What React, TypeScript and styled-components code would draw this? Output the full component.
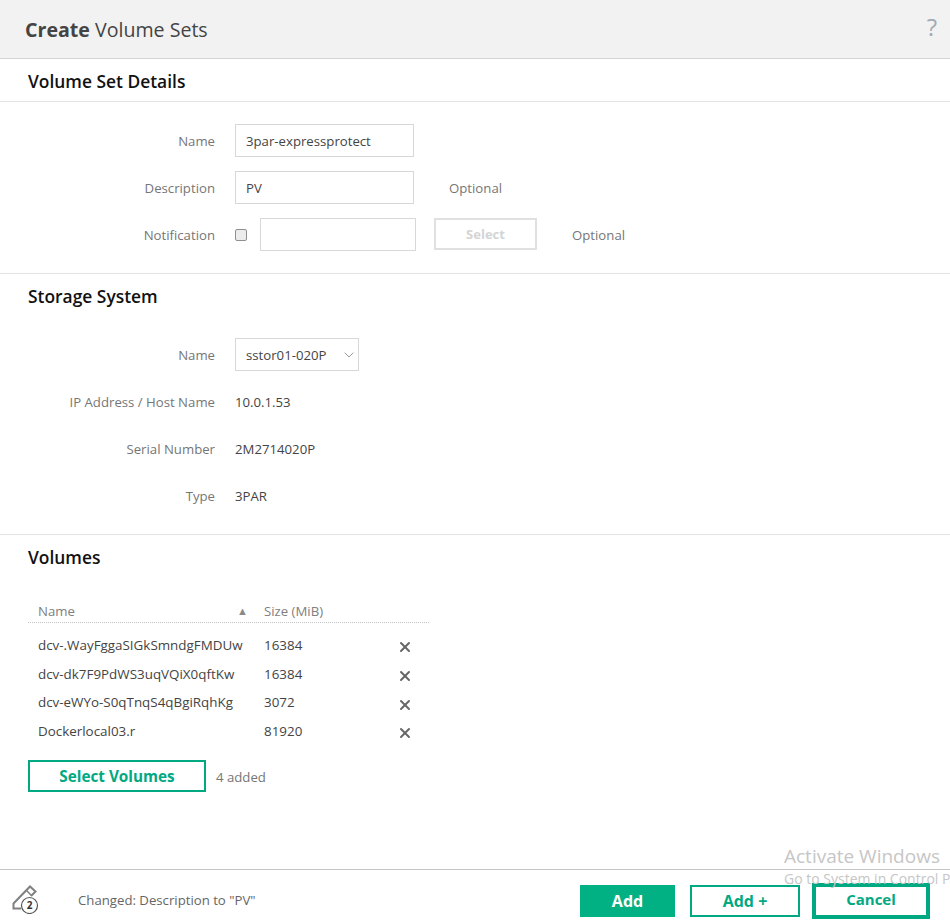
import React from "react";
import styled, { createGlobalStyle } from "styled-components";
import { ChevronDown, X } from "lucide-react";

const GlobalStyle = createGlobalStyle`
  html, body {
    margin: 0;
    padding: 0;
    background: #fff;
  }
  body {
    font-family: "Open Sans", "Liberation Sans", sans-serif;
    font-size: 13.2px;
    color: #555;
  }
`;

const Page = styled.div`
  position: relative;
  width: 950px;
  height: 922px;
  overflow: hidden;
  display: flex;
  flex-direction: column;
`;

const Header = styled.header`
  height: 58px;
  background: #f2f2f2;
  border-bottom: 1px solid #d4d4d4;
  display: flex;
  align-items: center;
  justify-content: space-between;
  padding: 0 13px 0 25px;
  color: #444;
  flex: none;
`;

const HeaderTitle = styled.h1`
  margin: 0;
  font-size: 19.6px;
  font-weight: 400;
  b {
    font-weight: 700;
  }
`;

const Help = styled.span`
  font-size: 24px;
  color: #a3abb2;
  padding-bottom: 5px;
`;

const SectionTitle = styled.h2<{ $ruled?: boolean }>`
  margin: 0;
  height: ${(p) => (p.$ruled ? "42px" : "44px")};
  line-height: 44px;
  padding-left: 28px;
  font-size: 17.4px;
  font-weight: 600;
  color: #111;
  border-bottom: ${(p) => (p.$ruled ? "1px solid #e4e4e4" : "none")};
  flex: none;
`;

const Section = styled.section<{ $height: number }>`
  height: ${(p) => p.$height}px;
  box-sizing: border-box;
  border-bottom: 1px solid #e4e4e4;
  flex: none;
`;

const FormBody = styled.div`
  padding-top: 22px;
  display: flex;
  flex-direction: column;
  gap: 14px;
`;

const InfoBody = styled.div`
  padding-top: 20px;
  display: flex;
  flex-direction: column;
  gap: 14px;
`;

const Row = styled.div`
  display: flex;
  align-items: center;
  height: 33px;
`;

const Label = styled.label`
  width: 215px;
  text-align: right;
  color: #767676;
  margin-right: 20px;
  flex: none;
`;

const Field = styled.div<{ $width: number }>`
  width: ${(p) => p.$width}px;
  height: 33px;
  box-sizing: border-box;
  border: 1px solid #d8d8d8;
  padding: 0 10px;
  display: flex;
  align-items: center;
  color: #444;
  flex: none;
`;

const SelectField = styled(Field)`
  justify-content: space-between;
  padding-right: 1px;
`;

const Optional = styled.span<{ $gap: number }>`
  margin-left: ${(p) => p.$gap}px;
  color: #767676;
`;

const Check = styled.span`
  width: 12px;
  height: 12px;
  box-sizing: border-box;
  background: #ececec;
  border: 1px solid #8f8f8f;
  border-radius: 2px;
  margin-right: 13px;
  flex: none;
`;

const DisabledButton = styled.button`
  width: 103px;
  height: 32px;
  margin-left: 18px;
  align-self: flex-start;
  background: #fff;
  border: 2px solid #e0e0e0;
  color: #d4d4d4;
  font: 700 13px "Open Sans", sans-serif;
  padding: 0;
`;

const Value = styled.span`
  color: #444;
`;

const VolumesBody = styled.div`
  flex: 1;
  padding: 0 0 0 28px;
`;

const Table = styled.div`
  width: 401px;
  margin-top: 20px;
`;

const TableHead = styled.div`
  display: grid;
  grid-template-columns: 226px 1fr;
  height: 24px;
  align-items: center;
  padding-left: 10px;
  box-sizing: border-box;
  border-bottom: 1px dotted #c4c4c4;
  color: #808080;
`;

const HeadName = styled.span`
  display: flex;
  justify-content: space-between;
  padding-right: 16px;
`;

const SortArrow = styled.span`
  font-size: 11px;
  color: #8a8a8a;
  align-self: center;
`;

const TableRow = styled.div`
  display: grid;
  grid-template-columns: 226px 1fr 32px;
  height: 28.7px;
  align-items: center;
  padding-left: 10px;
  font-size: 13.4px;
  color: #444;
`;

const Remove = styled.span`
  display: flex;
  align-items: center;
  color: #666;
  padding-top: 5px;
`;

const TableBody = styled.div`
  padding-top: 7.5px;
`;

const SelectLine = styled.div`
  display: flex;
  align-items: center;
  margin-top: 14.7px;
  gap: 10px;
  color: #767676;
`;

const Added = styled.span`
  padding-top: 2px;
`;

const OutlineButton = styled.button<{ $width: number; $size: number }>`
  width: ${(p) => p.$width}px;
  height: 32px;
  box-sizing: border-box;
  background: #fff;
  border: 2px solid #01a982;
  color: #01a982;
  font: 700 ${(p) => p.$size}px "Open Sans", sans-serif;
  padding: 0;
`;

const CancelButton = styled(OutlineButton)`
  height: 36px;
  border-width: 4px;
  margin-left: -3px;
  padding-bottom: 4px;
`;

const PrimaryButton = styled.button`
  width: 95px;
  height: 32px;
  background: #01b184;
  border: none;
  color: #fff;
  font: 700 16px "Open Sans", sans-serif;
  padding: 0;
`;

const Footer = styled.footer`
  height: 52px;
  border-top: 1px solid #c4c4c4;
  display: flex;
  align-items: center;
  padding: 0 20px 0 11px;
  flex: none;
`;

const Status = styled.span`
  margin-left: 31px;
  padding-top: 8px;
  flex: 1;
  color: #666;
`;

const Actions = styled.div`
  display: flex;
  align-items: center;
  gap: 15px;
  padding-top: 10px;
`;

const Watermark = styled.div`
  position: absolute;
  left: 784px;
  top: 845px;
  color: #c6c6c6;
  white-space: nowrap;
  pointer-events: none;
`;

const WatermarkTitle = styled.div`
  font-size: 19px;
  line-height: 22px;
`;

const WatermarkText = styled.div`
  font-size: 14px;
  line-height: 20px;
  margin-top: 2px;
`;

const rows = [
  { name: "dcv-.WayFggaSIGkSmndgFMDUw", size: "16384" },
  { name: "dcv-dk7F9PdWS3uqVQiX0qftKw", size: "16384" },
  { name: "dcv-eWYo-S0qTnqS4qBgiRqhKg", size: "3072" },
  { name: "Dockerlocal03.r", size: "81920" },
];

const details = [
  { label: "IP Address / Host Name", value: "10.0.1.53" },
  { label: "Serial Number", value: "2M2714020P" },
  { label: "Type", value: "3PAR" },
];

function ChangesIcon() {
  return (
    <svg width="36" height="36" viewBox="0 0 36 36" fill="none">
      <path d="M10 30.5 L2.5 30.5 L2.5 25.5 L19 8.5 L24.5 13.5 L20 18" stroke="#808080" strokeWidth="2" />
      <path d="M15 12 L20.5 17.5" stroke="#808080" strokeWidth="1.5" />
      <circle cx="18.5" cy="27.5" r="8" fill="#fff" stroke="#555" strokeWidth="1.2" />
      <text x="18.5" y="31" fontSize="10" fontWeight="700" textAnchor="middle" fill="#333" fontFamily="Open Sans">
        2
      </text>
    </svg>
  );
}

export default function App() {
  return (
    <Page>
      <GlobalStyle />
      <Header>
        <HeaderTitle>
          <b>Create</b> Volume Sets
        </HeaderTitle>
        <Help>?</Help>
      </Header>

      <Section $height={215}>
        <SectionTitle $ruled>Volume Set Details</SectionTitle>
        <FormBody>
          <Row>
            <Label>Name</Label>
            <Field $width={179}>3par-expressprotect</Field>
          </Row>
          <Row>
            <Label>Description</Label>
            <Field $width={179}>PV</Field>
            <Optional $gap={35}>Optional</Optional>
          </Row>
          <Row>
            <Label>Notification</Label>
            <Check />
            <Field $width={156} />
            <DisabledButton disabled>Select</DisabledButton>
            <Optional $gap={35}>Optional</Optional>
          </Row>
        </FormBody>
      </Section>

      <Section $height={261}>
        <SectionTitle>Storage System</SectionTitle>
        <InfoBody>
          <Row>
            <Label>Name</Label>
            <SelectField $width={124}>
              sstor01-020P
              <ChevronDown size={16} color="#999" strokeWidth={1.5} />
            </SelectField>
          </Row>
          {details.map((d) => (
            <Row key={d.label}>
              <Label>{d.label}</Label>
              <Value>{d.value}</Value>
            </Row>
          ))}
        </InfoBody>
      </Section>

      <SectionTitle>Volumes</SectionTitle>
      <VolumesBody>
        <Table>
          <TableHead>
            <HeadName>
              Name
              <SortArrow>▲</SortArrow>
            </HeadName>
            <span>Size (MiB)</span>
          </TableHead>
          <TableBody>
            {rows.map((r) => (
              <TableRow key={r.name}>
                <span>{r.name}</span>
                <span>{r.size}</span>
                <Remove>
                  <X size={16} strokeWidth={3} />
                </Remove>
              </TableRow>
            ))}
          </TableBody>
        </Table>
        <SelectLine>
          <OutlineButton $width={178} $size={15.3}>
            Select Volumes
          </OutlineButton>
          <Added>4 added</Added>
        </SelectLine>
      </VolumesBody>

      <Footer>
        <ChangesIcon />
        <Status>Changed: Description to "PV"</Status>
        <Actions>
          <PrimaryButton>Add</PrimaryButton>
          <OutlineButton $width={110} $size={16}>
            Add +
          </OutlineButton>
          <CancelButton $width={118} $size={15}>
            Cancel
          </CancelButton>
        </Actions>
      </Footer>

      <Watermark>
        <WatermarkTitle>Activate Windows</WatermarkTitle>
        <WatermarkText>Go to System in Control P</WatermarkText>
      </Watermark>
    </Page>
  );
}
